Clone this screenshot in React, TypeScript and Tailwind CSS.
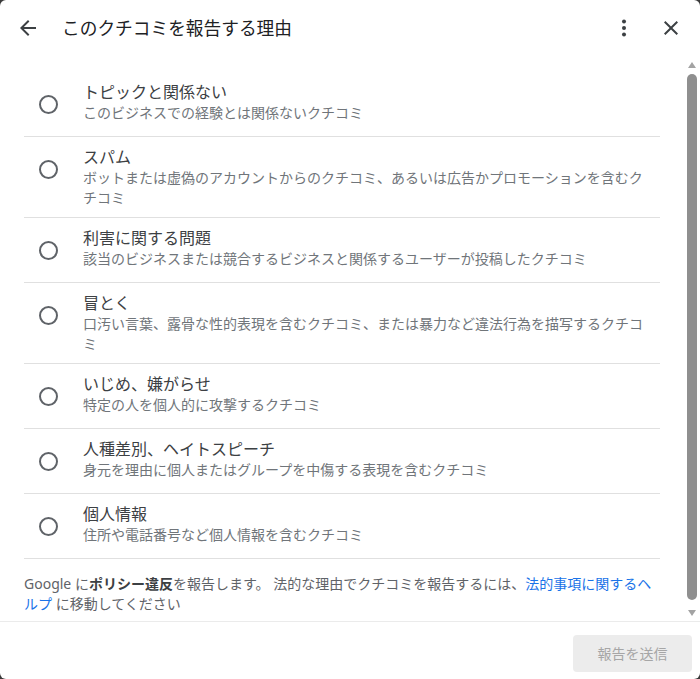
const reasons = [
  { title: 'トピックと関係ない', desc: 'このビジネスでの経験とは関係ないクチコミ' },
  { title: 'スパム', desc: 'ボットまたは虚偽のアカウントからのクチコミ、あるいは広告かプロモーションを含むクチコミ' },
  { title: '利害に関する問題', desc: '該当のビジネスまたは競合するビジネスと関係するユーザーが投稿したクチコミ' },
  { title: '冒とく', desc: '口汚い言葉、露骨な性的表現を含むクチコミ、または暴力など違法行為を描写するクチコミ' },
  { title: 'いじめ、嫌がらせ', desc: '特定の人を個人的に攻撃するクチコミ' },
  { title: '人種差別、ヘイトスピーチ', desc: '身元を理由に個人またはグループを中傷する表現を含むクチコミ' },
  { title: '個人情報', desc: '住所や電話番号など個人情報を含むクチコミ' },
];

function ReasonRow({ title, desc }: { title: string; desc: string }) {
  return (
    <label className="flex min-h-[65px] items-start border-b border-[#e0e0e0] pb-[9px] pt-[9px] cursor-pointer">
      <span className="flex w-[59px] shrink-0 pl-[15px] pt-[14px]">
        <span className="block h-[19px] w-[19px] rounded-full border-2 border-[#5f6368]" />
      </span>
      <span className="flex flex-1 flex-col pr-[10px]">
        <span className="text-[16px] leading-[22px] text-[#3c4043]">{title}</span>
        <span className="text-[14px] leading-[20px] text-[#70757a]">{desc}</span>
      </span>
    </label>
  );
}

export default function App() {
  return (
    <div className="h-[679px] w-[700px] bg-[#3a3a3a]" style={{ fontFamily: '"Noto Sans", "Noto Sans CJK JP", sans-serif' }}>
      <div className="flex h-full w-full flex-col overflow-hidden rounded-[6px] bg-white">
        {/* header */}
        <header className="flex h-[56px] shrink-0 items-center pl-[16px] pr-[17px]">
          <button className="flex h-[24px] w-[24px] items-center justify-center text-[#3c4043]">
            <svg width="24" height="24" viewBox="0 0 24 24" fill="currentColor">
              <path d="M20 11H7.83l5.59-5.59L12 4l-8 8 8 8 1.41-1.41L7.83 13H20v-2z" />
            </svg>
          </button>
          <h1 className="ml-[22px] flex-1 text-[17.7px] text-[#202124]">このクチコミを報告する理由</h1>
          <button className="flex h-[24px] w-[24px] items-center justify-center text-[#3c4043]">
            <svg width="24" height="24" viewBox="0 0 24 24" fill="currentColor">
              <circle cx="12" cy="5.5" r="2" />
              <circle cx="12" cy="12" r="2" />
              <circle cx="12" cy="18.5" r="2" />
            </svg>
          </button>
          <button className="ml-[23px] flex h-[24px] w-[24px] items-center justify-center text-[#3c4043]">
            <svg width="24" height="24" viewBox="0 0 24 24" fill="currentColor">
              <path d="M19 6.41L17.59 5 12 10.59 6.41 5 5 6.41 10.59 12 5 17.59 6.41 19 12 13.41 17.59 19 19 17.59 13.41 12z" />
            </svg>
          </button>
        </header>

        {/* body + fake scrollbar */}
        <div className="flex min-h-0 flex-1">
          <div className="flex-1 pl-[24px] pr-[26px] pt-[16px]">
            {reasons.map((r) => (
              <ReasonRow key={r.title} title={r.title} desc={r.desc} />
            ))}
            <p className="pt-[15px] text-[14px] leading-[20px] text-[#5f6368]">
              Google に<b className="font-bold text-[#3c4043]">ポリシー違反</b>を報告します。 法的な理由でクチコミを報告するには、
              <a className="text-[#1a73e8]">法的事項に関するヘルプ</a> に移動してください
            </p>
          </div>
          <div className="flex w-[14px] shrink-0 flex-col items-center pb-[3px] pr-[2px] pt-[4px]">
            <svg width="8" height="6" viewBox="0 0 8 6" className="mt-[2px] shrink-0">
              <path d="M4 0L8 6H0z" fill="#a3a3a3" />
            </svg>
            <div className="mt-[6px] h-[526px] w-[10px] rounded-[5px] bg-[#8f8f8f]" />
            <div className="flex-1" />
            <svg width="8" height="6" viewBox="0 0 8 6" className="mb-[2px] shrink-0">
              <path d="M0 0H8L4 6z" fill="#a3a3a3" />
            </svg>
          </div>
        </div>

        {/* footer */}
        <footer className="flex h-[58px] shrink-0 items-start justify-end border-t border-[#ebebeb] pr-[8px] pt-[13px]">
          <button className="h-[37px] w-[119px] rounded-[4px] bg-[#ececec] text-[14px] text-[#a6a6a6]">報告を送信</button>
        </footer>
      </div>
    </div>
  );
}
